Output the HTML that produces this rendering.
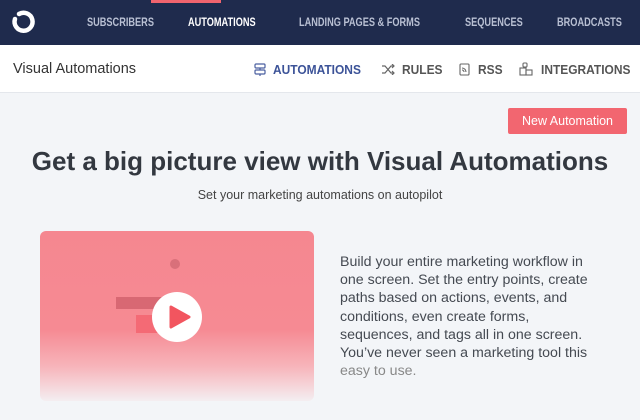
<!DOCTYPE html>
<html><head><style>
*{margin:0;padding:0;box-sizing:border-box}
body{width:640px;height:420px;overflow:hidden;background:#f3f5f8;font-family:"Liberation Sans",sans-serif;position:relative}
.nav{position:absolute;left:0;top:0;width:640px;height:45px;background:#1f2b4d}
.nav .bar{position:absolute;left:151px;top:0;width:70px;height:3px;background:#f0646e}
.nav span{position:absolute;top:17px;font-size:11.5px;font-weight:bold;color:#b9c0d3;transform:scaleX(0.8);transform-origin:0 0;white-space:nowrap}
.sub{position:absolute;left:0;top:45px;width:640px;height:48px;background:#fff;border-bottom:1px solid #e4e7ec}
.sub span{position:absolute;top:17px;font-size:13px;font-weight:bold;color:#555;transform:scaleX(0.92);transform-origin:0 0;white-space:nowrap}
.abs{position:absolute}
</style></head><body>
<div class="nav"><div class="bar"></div>
<svg class="abs" style="left:10px;top:9px" width="26" height="26" viewBox="0 0 26 26"><path d="M9 5 A9 9 0 1 1 5 10" fill="none" stroke="#fff" stroke-width="4.5" stroke-linecap="round"/></svg>
<span style="left:87px">SUBSCRIBERS</span>
<span style="left:188px;color:#fff">AUTOMATIONS</span>
<span style="left:299px">LANDING PAGES &amp; FORMS</span>
<span style="left:465px">SEQUENCES</span>
<span style="left:557px">BROADCASTS</span>
</div>
<div class="sub">
<span style="left:13px;top:16px;font-weight:normal;font-size:14.5px;color:#333;transform:none">Visual Automations</span>
<svg class="abs" style="left:254px;top:18px" width="12" height="13" viewBox="0 0 12 13" fill="none" stroke="#4a5fa0" stroke-width="1.2"><rect x="1" y="1" width="10" height="4" rx="1"/><rect x="1" y="7" width="10" height="4" rx="1"/><path d="M6 5v2M6 11v2"/></svg>
<span style="left:273px;color:#3c5398">AUTOMATIONS</span>
<svg class="abs" style="left:381px;top:19px" width="14" height="11" viewBox="0 0 14 11" fill="none" stroke="#666" stroke-width="1.2"><path d="M1 2h3l6 7h3M1 9h3l6-7h3M11 0l2 2-2 2M11 7l2 2-2 2"/></svg>
<span style="left:402px">RULES</span>
<svg class="abs" style="left:459px;top:18px" width="11" height="13" viewBox="0 0 11 13" fill="none" stroke="#666" stroke-width="1.1"><rect x="1" y="1" width="9" height="11" rx="1"/><path d="M3 5a4 4 0 0 1 4 4M3 7a2 2 0 0 1 2 2"/></svg>
<span style="left:478px">RSS</span>
<svg class="abs" style="left:519px;top:17px" width="15" height="15" viewBox="0 0 15 15" fill="none" stroke="#666" stroke-width="1.1"><rect x="4" y="1" width="4" height="4" rx="1"/><rect x="1" y="6" width="6" height="7"/><rect x="7" y="8" width="6" height="5"/></svg>
<span style="left:541px">INTEGRATIONS</span>
</div>
<div class="abs" style="left:508px;top:108px;width:119px;height:26px;background:#f26670;border-radius:2px;color:#fff;font-size:12.5px;text-align:center;line-height:26px">New Automation</div>
<div class="abs" style="left:0;top:146px;width:640px;text-align:center;font-size:26px;font-weight:bold;color:#333840">Get a big picture view with Visual Automations</div>
<div class="abs" style="left:0;top:188px;width:640px;text-align:center;font-size:12.5px;color:#444">Set your marketing automations on autopilot</div>
<div class="abs" style="left:40px;top:231px;width:274px;height:170px;border-radius:6px;overflow:hidden;background:linear-gradient(#f58790 0%,#f68a93 58%,#f7b5bb 80%,#f4eef1 100%)">
<div class="abs" style="left:130px;top:28px;width:10px;height:10px;border-radius:50%;background:#d9707a"></div>
<div class="abs" style="left:76px;top:66px;width:60px;height:12px;background:#d86873"></div>
<div class="abs" style="left:96px;top:84px;width:30px;height:18px;background:#f46a75"></div>
</div>
<div class="abs" style="left:152px;top:292px;width:50px;height:50px;border-radius:50%;background:#fff"></div>
<svg class="abs" style="left:168px;top:304px" width="24" height="26" viewBox="0 0 24 26"><path d="M3 3 L21 13 L3 23 Z" fill="#f2555f" stroke="#f2555f" stroke-width="3" stroke-linejoin="round"/></svg>
<div class="abs" style="left:340px;top:253px;white-space:nowrap;font-size:14.2px;line-height:18.2px;color:#454a52">Build your entire marketing workflow in<br>one screen. Set the entry points, create<br>paths based on actions, events, and<br>conditions, even create forms,<br>sequences, and tags all in one screen.<br>You’ve never seen a marketing tool this<br><span style="color:#888">easy to use.</span></div>
</body></html>
